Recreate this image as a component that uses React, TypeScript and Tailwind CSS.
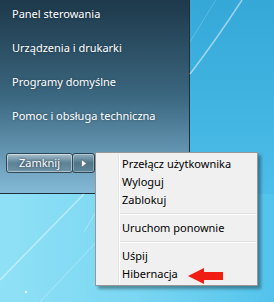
const items = [
  "Panel sterowania",
  "Urządzenia i drukarki",
  "Programy domyślne",
  "Pomoc i obsługa techniczna",
];

const menu: (string | null)[] = [
  "Przełącz użytkownika",
  "Wyloguj",
  "Zablokuj",
  null,
  "Uruchom ponownie",
  null,
  "Uśpij",
  "Hibernacja",
];

// wallpaper light streaks
function Streaks() {
  return (
    <svg
      className="pointer-events-none absolute left-0 top-0"
      width="274"
      height="302"
      viewBox="0 0 274 302"
    >
      <path d="M190 74 Q216 40 242 0" stroke="#ffffff" strokeOpacity="0.5" strokeWidth="1.5" fill="none" />
      <path d="M190 42 Q202 22 216 0" stroke="#ffffff" strokeOpacity="0.18" strokeWidth="1" fill="none" />
      <path d="M0 280 L84 194" stroke="#ffffff" strokeOpacity="0.45" strokeWidth="1.5" fill="none" />
      <path d="M40 302 L100 238" stroke="#ffffff" strokeOpacity="0.3" strokeWidth="1" fill="none" />
      <path d="M84 232 L100 205" stroke="#ffffff" strokeOpacity="0.3" strokeWidth="1" fill="none" />
      <circle cx="26" cy="292" r="1.2" fill="#ffffff" fillOpacity="0.7" />
    </svg>
  );
}

export default function App() {
  return (
    <div className="relative flex h-[302px] w-[274px] flex-col overflow-hidden font-['Noto_Sans',sans-serif] text-[11px]">
      <div className="flex h-[194px]">
        <div className="flex h-[194px] w-[190px] flex-col border-b border-r border-[#1d2f3a] bg-gradient-to-b from-[#1e394b] via-[#3b6780] to-[#84bad7]">
          <div className="flex flex-col gap-[14px] pl-[12px] pt-[4px]">
            {items.map((t) => (
              <div
                key={t}
                className="h-[20px] leading-[20px] text-white [text-shadow:0_0_3px_rgba(0,0,0,0.35)]"
              >
                {t}
              </div>
            ))}
          </div>

          <div className="mt-auto mb-[20px] ml-[6px] flex">
            <div className="flex h-[20px] w-[67px] items-center justify-center rounded-[3px] border border-[#2d4757] bg-gradient-to-b from-[#a9c2cf] via-[#5c8296] to-[#6f93a6] text-white shadow-[inset_0_0_0_1px_rgba(255,255,255,0.45)] [text-shadow:0_0_3px_rgba(0,0,0,0.6)]">
              Zamknij
            </div>
            <div className="ml-[-1px] flex h-[20px] w-[23px] items-center justify-center rounded-[3px] border border-[#2d4757] bg-gradient-to-b from-[#8fb0c1] via-[#4f7589] to-[#5f8599] shadow-[inset_0_0_0_1px_rgba(255,255,255,0.3)]">
              <svg width="6" height="9" viewBox="0 0 6 9">
                <path d="M0.5 0.5 L5.5 4.5 L0.5 8.5 Z" fill="#ffffff" stroke="#3a5566" strokeWidth="0.6" />
              </svg>
            </div>
          </div>
        </div>
        <div className="flex-1 bg-gradient-to-b from-[#35a8d8] to-[#4dbee9]" />
      </div>
      <div className="flex-1 bg-gradient-to-r from-[#8fe1f6] via-[#7ad6f2] to-[#52c3ec]" />

      <Streaks />

      <div className="absolute left-[95px] top-[152px] w-[163px] border border-[#979797] bg-[#f0f0f0] py-[2px] text-black shadow-[3px_3px_3px_rgba(0,0,0,0.35)]">
        <div className="absolute bottom-[2px] left-[22px] top-[2px] w-px bg-[#e2e3e3]" />
        <div className="absolute bottom-[2px] left-[23px] top-[2px] w-px bg-white" />
        {menu.map((m, i) =>
          m === null ? (
            <div key={i} className="relative ml-[24px] mr-[1px] flex h-[10px] flex-col justify-center">
              <div className="h-px bg-[#e0e0e0]" />
              <div className="h-px bg-white" />
            </div>
          ) : (
            <div key={i} className="relative h-[18px] pl-[26px] leading-[18px]">
              {m}
            </div>
          )
        )}
      </div>

      <svg
        className="absolute left-[187px] top-[267px]"
        width="38"
        height="18"
        viewBox="0 0 38 18"
      >
        <path d="M1 9 L17 1 L17 5 L36 5 L36 13 L17 13 L17 17 Z" fill="#f01e12" />
      </svg>
    </div>
  );
}
